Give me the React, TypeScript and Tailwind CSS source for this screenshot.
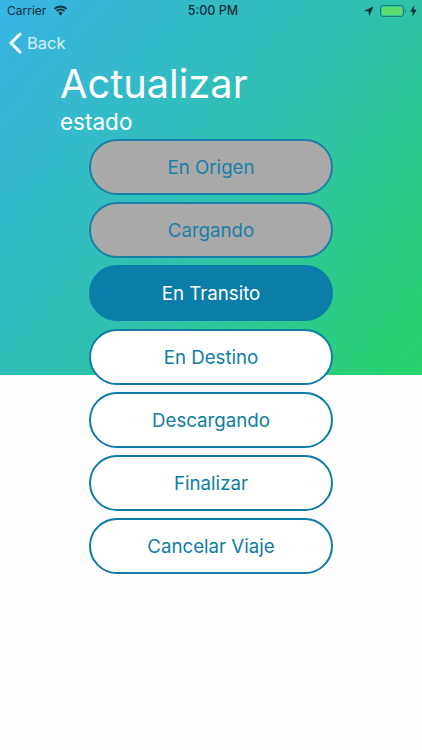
import React from 'react';

const states = [
  { label: 'En Origen', kind: 'done' },
  { label: 'Cargando', kind: 'done' },
  { label: 'En Transito', kind: 'current' },
  { label: 'En Destino', kind: 'next' },
  { label: 'Descargando', kind: 'next' },
  { label: 'Finalizar', kind: 'next' },
  { label: 'Cancelar Viaje', kind: 'next' },
];

const kindClass: Record<string, string> = {
  done: 'bg-[#a9a9a9] text-[#1a7fa6] border-[#1a7fa6]',
  current: 'bg-[#0a7ea8] text-white border-[#0a7ea8]',
  next: 'bg-white text-[#0f7ca3] border-[#0f7ca3]',
};

function StatusBar() {
  return (
    <div className="h-[22px] flex items-center justify-between pl-[7px] pr-[5px] text-[12px] leading-none text-[#10303a]">
      <div className="flex items-center gap-[7px] w-[120px]">
        <span>Carrier</span>
        <svg width="15" height="11" viewBox="0 0 15 11" fill="#10303a" className="-mt-[1px]">
          <path d="M7.5 2.4c2.1 0 4 .8 5.4 2.2l1.3-1.4A9.6 9.6 0 0 0 7.5.4 9.6 9.6 0 0 0 .8 3.2l1.3 1.4a7.7 7.7 0 0 1 5.4-2.2z" />
          <path d="M7.5 5.4c1.3 0 2.4.5 3.3 1.3l1.3-1.4a6.6 6.6 0 0 0-9.2 0l1.3 1.4c.9-.8 2-1.3 3.3-1.3z" />
          <path d="M7.5 10.6l2.4-2.6a3.4 3.4 0 0 0-4.8 0z" />
        </svg>
      </div>
      <span className="font-medium text-[12.5px] ml-[2px]">5:00 PM</span>
      <div className="flex items-center justify-end gap-[4px] w-[120px]">
        <svg width="11" height="11" viewBox="0 0 11 11" fill="#10303a">
          <path d="M10.5.5L.8 4.9l4.6.7.8 4.7z" />
        </svg>
        <div className="flex items-center ml-[2px]">
          <div className="w-[24px] h-[12px] rounded-[3px] border border-[#1f7f78] p-[1px]">
            <div className="w-full h-full rounded-[1.5px] bg-[#5cdc6c]" />
          </div>
          <div className="w-[1px] h-[4px] bg-[#1f7f78] ml-[1px]" />
        </div>
        <svg width="7" height="12" viewBox="0 0 7 12" fill="#10303a">
          <path d="M4.2 0L.3 6.8h2.5L2.2 12l4.4-7.2H4z" />
        </svg>
      </div>
    </div>
  );
}

export default function App() {
  return (
    <div className="h-[750px] w-[422px] overflow-hidden bg-[#fdfdfd] font-['Inter','Liberation_Sans',sans-serif]">
      <div className="h-[375px] bg-[linear-gradient(130deg,#38b4e6_0%,#2fc0b0_50%,#29d36a_100%)]">
        <StatusBar />
        <div className="h-[41px] flex items-center pl-[9px] gap-[5px] text-white/80 pt-[1px]">
          <svg width="13" height="22" viewBox="0 0 13 22" fill="none" stroke="white" strokeWidth="3" strokeLinecap="round" strokeLinejoin="round">
            <path d="M11 2L2 11l9 9" />
          </svg>
          <span className="text-[16.5px] leading-none">Back</span>
        </div>
        <div className="pl-[60px] text-white">
          <h1 className="text-[39.8px] leading-[46px] -mt-[2px]">Actualizar</h1>
          <p className="text-[22.5px] leading-[26px] mt-[2px]">estado</p>
        </div>
        <div className="ml-[89px] mt-[4px] w-[244px] flex flex-col gap-[7.2px]">
          {states.map((s) => (
            <button
              key={s.label}
              className={`h-[56px] rounded-[28px] border-2 pt-[2px] text-[18.7px] flex items-center justify-center shrink-0 ${kindClass[s.kind]}`}
            >
              {s.label}
            </button>
          ))}
        </div>
      </div>
    </div>
  );
}
